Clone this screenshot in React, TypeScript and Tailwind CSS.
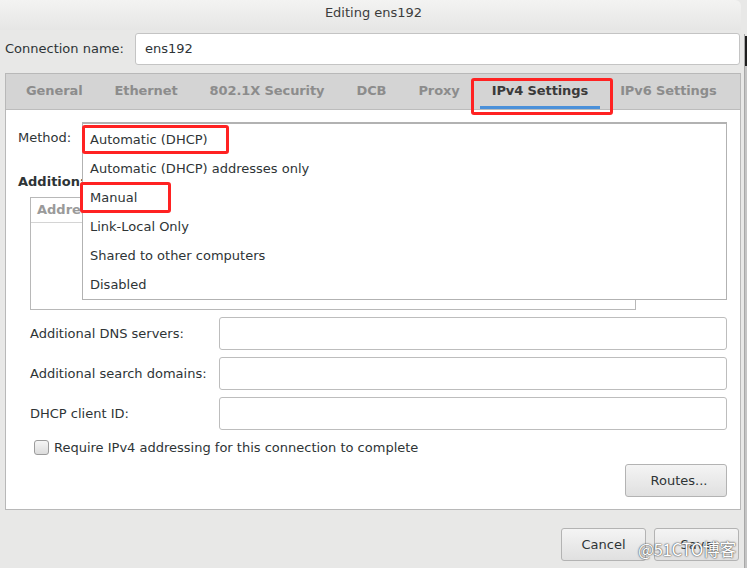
import React from 'react'

const tabs = ['General', 'Ethernet', '802.1X Security', 'DCB', 'Proxy', 'IPv4 Settings', 'IPv6 Settings']
const methods = [
  'Automatic (DHCP)',
  'Automatic (DHCP) addresses only',
  'Manual',
  'Link-Local Only',
  'Shared to other computers',
  'Disabled',
]
const fields = ['Additional DNS servers:', 'Additional search domains:', 'DHCP client ID:']

export default function App() {
  return (
    <div className="relative flex h-[568px] w-[747px] overflow-hidden bg-[#e8e8e7] font-['DejaVu_Sans',sans-serif] text-[13px] text-[#2e3436]">
      <div className="flex w-[741px] flex-col">
        {/* title bar */}
        <div className="flex h-[30px] items-center justify-center rounded-tr-[6px] bg-gradient-to-b from-[#f3f3f2] to-[#e6e6e5] pb-[4px] pl-[6px] text-[#3c3c3c]">
          Editing ens192
        </div>

        <div className="mt-[3px] flex h-[32px] items-center pr-[1px]">
          <span className="w-[135px] pl-[5px]">Connection name:</span>
          <div className="flex h-full flex-1 items-center rounded-[3px] border border-[#c4c4c4] bg-white pl-[9px]">ens192</div>
        </div>

        {/* notebook */}
        <div className="ml-[5px] mt-[8px] flex w-[736px] flex-col border border-[#b8b8b8] bg-white">
          <div className="flex h-[36px] gap-[8px] border-b border-[#bcbcbc] bg-[#d4d4d4] pl-[8px] font-bold tracking-[-0.1px]">
            {tabs.map((t) => (
              <div
                key={t}
                className={`flex items-center border-b-[3px] px-[12px] pt-[1px] ${
                  t === 'IPv4 Settings' ? 'border-[#4a90d9] text-[#3a3a3a]' : 'border-transparent text-[#8c8c8c]'
                }`}
              >
                {t}
              </div>
            ))}
          </div>

          <div className="flex flex-col pl-[12px] pr-[13px] pt-[13px]">
            <div className="flex h-[30px] items-center">Method:</div>
            <div className="mt-[20px] flex h-[18px] items-center font-bold">Additional static addresses</div>
            <div className="ml-[12px] mt-[6px] h-[113px] w-[606px] border border-[#b8b8b8]">
              <div className="flex h-[25px] items-center border-b border-[#d4d4d4] pl-[6px] font-bold text-[#9a9a9a]">Address</div>
            </div>

            <div className="ml-[12px] mt-[7px] flex flex-col gap-[7px]">
              {fields.map((f) => (
                <div key={f} className="flex h-[33px] items-center">
                  <span className="w-[189px]">{f}</span>
                  <div className="h-full flex-1 rounded-[3px] border border-[#bdbdbd] bg-white" />
                </div>
              ))}
            </div>

            <div className="ml-[16px] mt-[10px] flex h-[15px] items-center gap-[5px]">
              <div className="h-[15px] w-[15px] rounded-[3px] border border-[#9c9c9c] bg-gradient-to-b from-[#f6f6f6] to-[#dcdcdc]" />
              <span>Require IPv4 addressing for this connection to complete</span>
            </div>

            <div className="mb-[12px] mt-[9px] flex justify-end">
              <div className="flex h-[33px] w-[102px] items-center justify-center rounded-[3px] border border-[#b3b3b3] bg-gradient-to-b from-[#f4f4f4] to-[#e0e0e0] pl-[6px]">
                Routes...
              </div>
            </div>
          </div>
        </div>

        <div className="mt-[18px] flex justify-end gap-[8px] pr-[2px]">
          <div className="flex h-[33px] w-[85px] items-center justify-center rounded-[3px] border border-[#b3b3b3] bg-gradient-to-b from-[#f4f4f4] to-[#e0e0e0]">
            Cancel
          </div>
          <div className="flex h-[33px] w-[85px] items-center justify-center rounded-[3px] border border-[#b3b3b3] bg-gradient-to-b from-[#f4f4f4] to-[#e0e0e0]">
            Save
          </div>
        </div>
      </div>

      {/* window edge */}
      <div className="flex w-[6px]">
        <div className="w-[3px]" />
        <div className="mt-[34px] w-[1px] bg-[#a8a8a8]" />
        <div className="mt-[36px] w-[2px] bg-[#c4c4c4]">
          <div className="h-[30px] bg-[#1e1e1e]" />
        </div>
      </div>

      {/* method popup */}
      <div className="absolute left-[82px] top-[122px] flex h-[178px] w-[645px] flex-col border border-t-2 border-[#b2b2b2] bg-white pt-[1px]">
        {methods.map((m) => (
          <div key={m} className="flex h-[29px] items-center pl-[7px]">
            {m}
          </div>
        ))}
      </div>

      {/* annotations */}
      <div className="absolute left-[471px] top-[78px] h-[37px] w-[142px] rounded-[3px] border-[3px] border-[#f22]" />
      <div className="absolute left-[82px] top-[125px] h-[29px] w-[147px] rounded-[3px] border-[3px] border-[#f22]" />
      <div className="absolute left-[80px] top-[182px] h-[31px] w-[91px] rounded-[3px] border-[3px] border-[#f22]" />

      <div className="absolute left-[638px] top-[536px] font-['Noto_Sans_CJK_SC',sans-serif] text-[17px] tracking-[-0.5px] text-white [text-shadow:0_0_2px_#444,0_0_1px_#444]">
        @51CTO博客
      </div>
    </div>
  )
}
